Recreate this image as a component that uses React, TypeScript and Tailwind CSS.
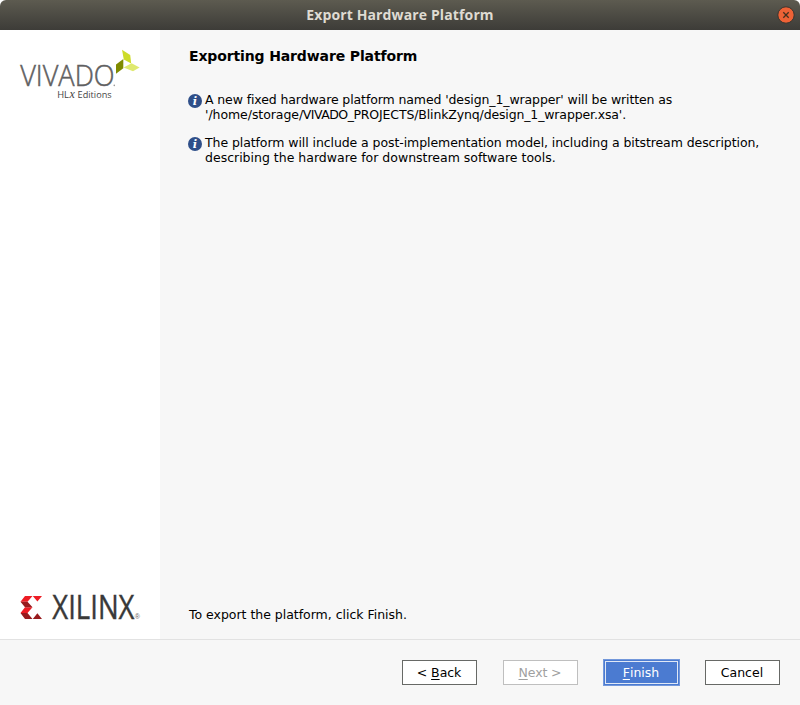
import React from "react";

function InfoIcon() {
  return (
    <svg className="mt-[2px] h-[14px] w-[14px] shrink-0" viewBox="0 0 14 14">
      <circle cx="7" cy="7" r="7" fill="#2f4f89" />
      <text x="7" y="11" fontSize="11.5" textAnchor="middle" fill="#fff" className="font-['DejaVu_Serif',serif] font-bold italic">i</text>
    </svg>
  );
}

function VivadoLogo() {
  return (
    <svg className="h-[80px] w-[160px]" viewBox="0 30 160 80">
      <text x="20.2" y="86.4" fontSize="29.8" fill="#5f6061" stroke="#5f6061" strokeWidth=".5" textLength="94.4" lengthAdjust="spacingAndGlyphs" className="font-['Open_Sans',sans-serif] font-light">VIVADO</text>
      <circle cx="114.3" cy="85.4" r=".8" fill="#999" />
      <path d="M122 49.7 130.2 55l1 8.6-7.4-4.2z" fill="#cddc29" />
      <path d="M116 64.4 123.3 59v9.2L116 73.7z" fill="#7f8b00" />
      <path d="m123.6 67.5 8-4.2 8 4.2-6.6 3.8z" fill="#dfe96f" />
      <text x="57.2" y="98" fontSize="9.8" fill="#444" textLength="11.8" lengthAdjust="spacingAndGlyphs" className="font-['Open_Sans',sans-serif]">HL</text>
      <text x="69.5" y="98" fontSize="12" fill="#444" className="font-['Liberation_Serif',serif] italic">x</text>
      <text x="77.6" y="98" fontSize="9.8" fill="#444" textLength="34" lengthAdjust="spacingAndGlyphs" className="font-['Open_Sans',sans-serif]">Editions</text>
    </svg>
  );
}

function XilinxLogo() {
  return (
    <svg className="h-[70px] w-[160px]" viewBox="0 580 160 70">
      <path d="M25 596h7.5l-5 5.7H20.5zM25 607.2h7.5l-5 5.8H20.5zM32.8 596H42l-4.6 5.6z" fill="#ed1c24" />
      <path d="M20.5 601.7h7l5 5.5H25zM20.5 613h7l5 6H25zM32.8 619H42l-4.6-5.8z" fill="#981b1e" />
      <text x="52.3" y="619" fontSize="32" fill="#393939" stroke="#393939" strokeWidth=".4" textLength="82.2" lengthAdjust="spacingAndGlyphs" className="font-['Open_Sans',sans-serif]">XILINX</text>
      <text x="134.7" y="619" fontSize="7" fill="#666" className="font-['Liberation_Sans',sans-serif]">®</text>
    </svg>
  );
}

function Notice({ children, className }: { children: React.ReactNode; className: string }) {
  return (
    <div className={`flex gap-[3px] ${className}`}>
      <InfoIcon />
      <p className="whitespace-nowrap leading-[15px]">{children}</p>
    </div>
  );
}

export default function App() {
  return (
    <div className="flex h-[705px] w-[800px] flex-col bg-white font-['DejaVu_Sans',sans-serif] text-[12.5px] text-black">
      <header className="flex h-[30px] shrink-0 items-center rounded-t-[6px] bg-linear-to-b from-[#5d5b50] to-[#3d3c38] pr-[5px]">
        <div className="w-[23px]" />
        <h1 className="flex-1 text-center font-['Open_Sans',sans-serif] text-[14px] leading-[20px] font-bold tracking-[0.13px] text-[#dfdbd2]">Export Hardware Platform</h1>
        <svg className="h-[18px] w-[18px]" viewBox="0 0 18 18">
          <circle cx="9" cy="9" r="8.2" fill="#ee6236" stroke="#38352f" />
          <path d="m6.3 6.3 5.4 5.4M11.7 6.3l-5.4 5.4" stroke="#44301f" strokeWidth="1.3" />
        </svg>
      </header>
      <div className="flex min-h-0 flex-1">
        <aside className="flex w-[160px] flex-col justify-between bg-white">
          <VivadoLogo />
          <div className="h-[59px]"><XilinxLogo /></div>
        </aside>
        <main className="flex flex-1 flex-col bg-[#f7f7f7] pl-[28px]">
          <h2 className="mt-[17px] pl-px text-[14px] leading-[18px] font-bold tracking-[-0.13px] whitespace-nowrap">Exporting Hardware Platform</h2>
          <Notice className="mt-[27px]">
            <span className="tracking-[-0.11px]">A new fixed hardware platform named 'design_1_wrapper' will be written as</span><br />
            <span className="tracking-[-0.06px]">'/home/storage</span><span className="tracking-[-0.5px]">/VIVADO_</span><span className="tracking-[-0.14px]">PROJECTS/BlinkZynq/design_1_wrapper.xsa'.</span>
          </Notice>
          <Notice className="mt-[13px]">
            <span className="tracking-[-0.08px]">The platform will include a post-implementation model, including a bitstream description,</span><br />
            describing the hardware for downstream software tools.
          </Notice>
          <p className="mt-auto mb-[17px] pl-px leading-[15px] tracking-[-0.02px]">To export the platform, click Finish.</p>
        </main>
      </div>
      <footer className="flex h-[66px] shrink-0 justify-end border-t border-[#e2e2e2] bg-[#f7f7f7] pt-[19px] pr-[20px]">
        <button className="mt-px mr-[26px] h-[25px] w-[75px] border border-[#676966] bg-white pt-px pr-px tracking-[-0.05px]">&lt; <span className="underline underline-offset-2">B</span>ack</button>
        <button className="mt-px mr-[25px] h-[25px] w-[75px] border border-[#bfbfbf] bg-white pt-px pr-px tracking-[-0.1px] text-[#a0a0a0]"><span className="underline underline-offset-2">N</span>ext &gt;</button>
        <button className="mr-[25px] h-[27px] w-[77px] border border-[#7398db] bg-[#4b7bd1] p-px text-white">
          <span className="flex h-full items-center justify-center border border-[#e0e8f6] pt-px pr-px"><span className="underline underline-offset-2">F</span>inish</span>
        </button>
        <button className="mt-px h-[25px] w-[75px] border border-[#676966] bg-white pt-px pr-px">Cancel</button>
      </footer>
    </div>
  );
}
